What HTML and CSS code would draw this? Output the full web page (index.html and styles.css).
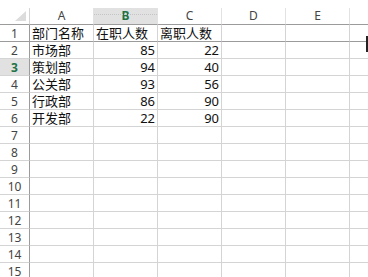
FILE: index.html
```html
<!DOCTYPE html>
<html lang="zh-CN">
<head>
    <meta charset="UTF-8">
    <title>部门人数</title>
    <link rel="stylesheet" href="styles.css">
</head>
<body>
    <div class="sheet" id="sheet">
        <div class="corner">
            <svg width="30" height="17" viewBox="0 0 30 17"><polygon points="15,13 26,13 26,3" fill="#dcdcdc"/></svg>
        </div>
        <div class="col-head">A</div>
        <div class="col-head active">B</div>
        <div class="col-head">C</div>
        <div class="col-head">D</div>
        <div class="col-head">E</div>
        <div class="col-head last"></div>
    </div>
    <div class="cursor-mark"></div>

    <script>
        const data = [
            ['部门名称', '在职人数', '离职人数'],
            ['市场部', 85, 22],
            ['策划部', 94, 40],
            ['公关部', 93, 56],
            ['行政部', 86, 90],
            ['开发部', 22, 90]
        ];

        const sheet = document.getElementById('sheet');

        function addCell(cls, text) {
            const cell = document.createElement('div');
            cell.className = cls;
            cell.textContent = text;
            sheet.appendChild(cell);
        }

        for (let r = 1; r <= 15; r++) {
            const row = data[r - 1] || [];
            const frozen = r === 1 ? ' frozen' : '';
            addCell('row-head' + frozen + (r === 3 ? ' active' : ''), r);
            for (let c = 0; c < 5; c++) {
                const value = row[c] === undefined ? '' : row[c];
                const num = typeof value === 'number' ? ' num' : '';
                addCell('cell' + frozen + num, value);
            }
            addCell('cell last' + frozen, '');
        }
    </script>
</body>
</html>
```

FILE: styles.css
```css
body {
    margin: 0;
    padding-top: 8px;
    background: #ffffff;
    font-family: 'Noto Sans', 'Noto Sans CJK SC', sans-serif;
    overflow: hidden;
    height: 277px;
    box-sizing: border-box;
}

.sheet {
    display: grid;
    grid-template-columns: 30px repeat(5, 64px) 1fr;
    grid-auto-rows: 17px;
}

.sheet > div {
    box-sizing: border-box;
    border-right: 1px solid #d4d4d4;
    border-bottom: 1px solid #d4d4d4;
    white-space: nowrap;
    overflow: hidden;
}

.corner {
    border-bottom-color: #9b9b9b !important;
}

.corner svg {
    display: block;
}

.col-head {
    position: relative;
    text-align: center;
    font-size: 12px;
    line-height: 16px;
    color: #444444;
    border-right-color: #e2e2e2 !important;
    border-bottom-color: #9b9b9b !important;
}

.col-head.active {
    background: #e1e1e1;
    color: #217346;
    font-weight: bold;
}

.col-head.active::before {
    content: '';
    position: absolute;
    left: 0;
    right: 0;
    top: 6px;
    border-top: 1px dotted #c4c4c4;
}

.row-head {
    text-align: center;
    font-size: 12px;
    line-height: 17px;
    color: #444444;
    border-right-color: #9b9b9b !important;
}

.row-head.active {
    background: #e1e1e1;
    color: #217346;
    font-weight: bold;
}

.cell {
    font-size: 13px;
    line-height: 17px;
    color: #111111;
    padding: 0 2px;
}

.cell.num {
    text-align: right;
}

.last {
    border-right: none !important;
}

.frozen {
    border-bottom-color: #9b9b9b !important;
}

.cursor-mark {
    position: absolute;
    left: 366px;
    top: 36px;
    width: 4px;
    height: 14px;
    border: 1px solid #222222;
    border-left-width: 2px;
    border-right: none;
}
```
